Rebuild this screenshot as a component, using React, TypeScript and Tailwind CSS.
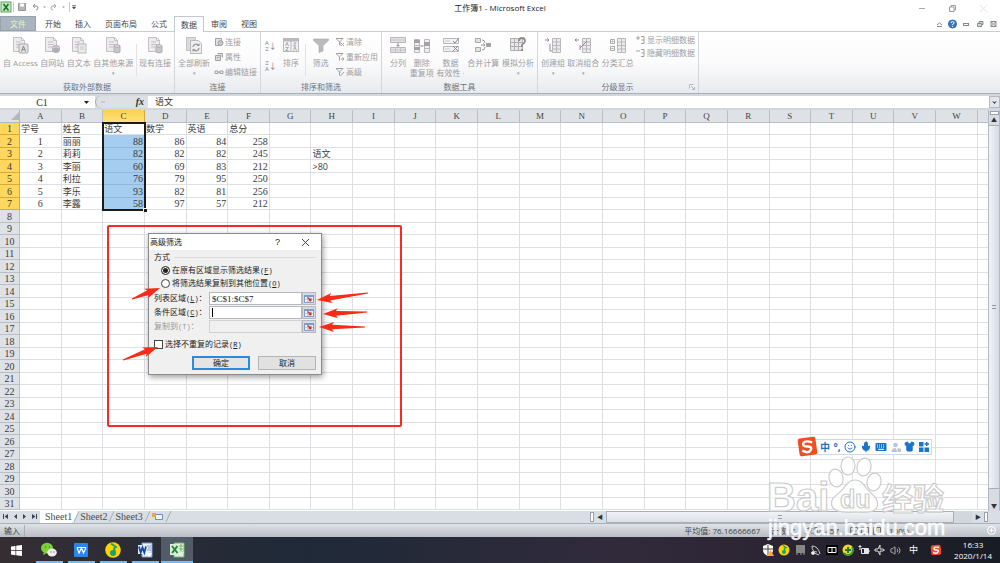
import React, { useState } from "react";
import { Mic, Smile, Shirt, Volume2 } from "lucide-react";

const COLUMNS = "ABCDEFGHIJKLMNOPQRSTUVW".split("");
const ROW_COUNT = 31;

const SHEET: (string | number)[][] = [
  ["学号", "姓名", "语文", "数学", "英语", "总分"],
  [1, "丽丽", 88, 86, 84, 258],
  [2, "莉莉", 82, 82, 82, 245, "", "语文"],
  [3, "李丽", 60, 69, 83, 212, "", ">80"],
  [4, "利拉", 76, 79, 95, 250],
  [5, "李乐", 93, 82, 81, 256],
  [6, "李露", 58, 97, 57, 212],
];

const TABS = ["开始", "插入", "页面布局", "公式", "数据", "审阅", "视图"];

interface GlyphProps {
  kind: string;
}

const Doc = () => (
  <path
    d="M2.5 1.5h8l3 3v11h-11z M10.500 1.500v3h3 M5 6h5 M5 8.500h6 M5 11h4"
    fill="#eeebef"
    stroke="#c4c0c5"
  />
);

// big disabled ribbon icons
const Glyph = ({ kind }: GlyphProps) => (
  <svg viewBox="0 0 18 18" className="size-[18px] shrink-0" fill="none">
    {kind === "access" && (
      <>
        <Doc />
        <rect x="8" y="8" width="9" height="9" rx="1" fill="#e4e2e5" stroke="#aaa" />
        <path d="M10.500 15.500l2-5.500 2 5.500 M11.200 13.700h2.600" stroke="#888" />
      </>
    )}
    {kind === "web" && (
      <>
        <Doc />
        <circle cx="13" cy="13" r="4" fill="#b2afb4" />
        <path d="M10 12q3-3 6 0" stroke="#dddbdf" />
      </>
    )}
    {kind === "text" && (
      <>
        <Doc />
        <rect x="8" y="8" width="8" height="9" fill="#eceaed" stroke="#bbb8bd" />
        <path d="M10 11h4 M10 13h4" stroke="#c8c5ca" />
      </>
    )}
    {kind === "db" && (
      <>
        <Doc />
        <path d="M10 10v6q3 2 6 0v-6" fill="#c9c6cb" stroke="#b0adb2" />
        <ellipse cx="13" cy="10" rx="3" ry="1.300" fill="#dddbdf" stroke="#b0adb2" />
      </>
    )}
    {kind === "refresh" && (
      <>
        <path d="M1.500 1.500h9v13h-9z" fill="#dddadf" stroke="#c4c1c6" />
        <path d="M5.500 4.500h8l3 3v10h-11z" fill="#efeef0" stroke="#bbb8bd" />
        <path d="M8 11a3 3 0 0 1 5-2 M14 12a3 3 0 0 1-5 2" stroke="#999" strokeWidth="1.300" />
        <path d="M14.500 7v3h-3z M7.500 16v-3h3z" fill="#999" />
      </>
    )}
    {kind === "sort" && (
      <>
        <rect x="1.500" y="2.500" width="15" height="13" fill="#f3f2f4" stroke="#bbb8bd" />
        <path d="M1 3h16v2.500H1z" fill="#bbb8bd" />
        <path d="M9 5v10" stroke="#bbb8bd" />
        <path
          d="M3.500 10l1.500-3.500L6.500 10 M3.700 11.500h2.700l-2.700 3h2.700 M11.500 7h2.700l-2.700 3h2.700 M11.500 14.500l1.500-3.500 1.500 3.500"
          stroke="#999"
          strokeWidth=".8"
        />
      </>
    )}
    {kind === "filter" && (
      <path d="M1.500 3h15v1.500L11 9.500v5.500l-4 1.500v-7L1.500 4.500z" fill="#bbb9bd" stroke="#a9a6ab" strokeWidth=".6" />
    )}
    {kind === "split" && (
      <>
        <path d="M1.500 1.500h15v5h-15z M1.500 11.500h15v5h-15z" fill="#e5e2e6" stroke="#bab6bb" />
        <path d="M1.500 4h15 M6.500 11.500v5 M11.500 11.500v5 M1.500 14h15" stroke="#c5c2c7" />
        <path d="M9 7v3 M7.500 9L9 10.500 10.500 9" stroke="#888" />
      </>
    )}
    {kind === "dup" && (
      <>
        <path d="M1.500 3.500h5v13h-5z M11.500 3.500h5v13h-5z M1.500 9.500h5 M11.500 12.500h5" fill="#f0eef0" stroke="#bbb8bd" />
        <path d="M1 4h6v3H1z M11 6h6v4h-6z M1 11h6v3H1z" fill="#a5a1a6" />
        <path d="M7.500 10h3" stroke="#888" />
      </>
    )}
    {kind === "valid" && (
      <>
        <path d="M1.500 2.500h15v5h-15z M1.500 10.500h15v5h-15z" fill="#f2f1f3" stroke="#bbb8bd" />
        <path d="M3 5h5 M3 13h5" stroke="#ccc" />
        <path d="M11 5l2 2 4-5 M11 10l5 5 M16 10l-5 5" stroke="#8f8c91" />
      </>
    )}
    {kind === "merge" && (
      <>
        <path d="M1.500 2.500h5v4h-5z M1.500 11.500h5v4h-5z" fill="#e5e2e6" stroke="#aaa" />
        <path d="M12 7h5v4h-5z" fill="#a5a2a7" />
        <path d="M8 4q3 0 3 3 M8 14q3 0 3-3 M7 9h4 M9.500 7.500L11 9l-1.500 1.500" stroke="#999" />
      </>
    )}
    {kind === "whatif" && (
      <>
        <path d="M1.500 2.500h12v12h-12z M1.500 6.500h12 M1.500 10.500h12 M5.500 2.500v12 M9.500 2.500v12" fill="#e8e6e9" stroke="#b0adb2" />
        <path d="M10 5q0-3 3-3t3 3q0 2-3 4v2" stroke="#8f8c91" strokeWidth="1.800" />
        <path d="M12 13h2v2h-2z" fill="#8f8c91" />
      </>
    )}
    {(kind === "group" || kind === "ungroup" || kind === "subtotal") && (
      <>
        <path d="M8.500 2.500h8v14h-8z M8.500 6h8 M8.500 9.500h8 M8.500 13h8 M12.500 2.500v14" fill="#eceaed" stroke="#bbb8bd" />
        {kind === "group" && <path d="M1 4h4 M3.500 2.500L5 4 3.500 5.500 M6 8v7h2" stroke="#8f8c91" />}
        {kind === "ungroup" && (
          <path d="M1 4h4 M2.500 2.500L1 4l1.500 1.500 M6 12l7-7 M6 9v5" stroke="#8f8c91" />
        )}
        {kind === "subtotal" && (
          <path d="M1.500 3.500h4v4h-4z M1.500 10.500h4v4h-4z M2.500 5.500h2 M3.500 4.500v2 M2.500 12.500h2" stroke="#aaa" />
        )}
      </>
    )}
  </svg>
);

const SmallGlyph = ({ kind }: GlyphProps) => (
  <svg viewBox="0 0 10 10" className="size-[10px] shrink-0" fill="none" stroke="#a3a0a5">
    {kind === "link" && (
      <>
        <path d="M1.500 1.500h6v7h-6z" fill="#e5e2e6" />
        <circle cx="6.500" cy="6" r="2.500" fill="#c9c6cb" />
      </>
    )}
    {kind === "prop" && (
      <>
        <path d="M1.500 3.500h5v5h-5z M3.500 1.500h5v4" fill="#dcdadd" />
        <path d="M3 5.500h2" />
      </>
    )}
    {kind === "chain" && <path d="M1 4h3v2.500H1z M6 4h3v2.500H6z M3.500 5.200h3" />}
    {kind === "clear" && <path d="M1 1.500h7L5 4.500v4 M1.500 2l3 3v3 M6 6l3 3 M9 6L6 9" />}
    {kind === "again" && <path d="M1 1.500h7L5 4.500 M1.500 2l3 3v3.500 M6 7h3 M7.500 5.500L9 7 7.500 8.500" />}
    {kind === "adv" && <path d="M1 1.500h7L5 4.500v1 M1.500 2l3 3v3.500 M5.500 9L9 5" />}
    {kind === "show" && <path d="M0 3h4 M2 1v4 M5 1.500h3v7H5 M5.500 5H8" />}
    {kind === "hide" && <path d="M0 3h4 M5 1.500h3v7H5 M5.500 5H8" />}
  </svg>
);

const Big = ({ kind, lines, drop }: { kind: string; lines: string[]; drop?: boolean }) => (
  <button className="flex shrink-0 flex-col items-center whitespace-nowrap pt-1 text-[8px] leading-[10px]">
    <Glyph kind={kind} />
    <span className="pt-1">{lines[0]}</span>
    {lines[1] && <span>{lines[1]}</span>}
    {drop && !lines[1] && <span className="text-[5px]">▾</span>}
  </button>
);

const Small = ({ kind, label }: { kind: string; label: string }) => (
  <button className="flex items-center gap-px whitespace-nowrap">
    <SmallGlyph kind={kind} />
    {label}
  </button>
);

const GroupBox = ({
  title,
  width,
  children,
}: {
  title: string;
  width: string;
  children: React.ReactNode;
}) => (
  <section className={`flex shrink-0 flex-col border-r border-[#d3d7dc] ${width}`}>
    <div className="flex flex-1 items-start justify-between px-[3px]">{children}</div>
    <h2 className="pb-px text-center text-[8px] leading-[11px] text-[#6b7380]">{title}</h2>
  </section>
);

const Divider = () => <div className="mt-3 h-8 w-px bg-[#dfe2e6]" />;

const SortArrows = ({ top, bottom }: { top: string; bottom: string }) => (
  <button className="flex items-center text-[6px] leading-[6px] text-[#858288]">
    <span className="flex flex-col">
      <span>{top}</span>
      <span>{bottom}</span>
    </span>
    <span className="text-[8px]">↓</span>
  </button>
);

const Ribbon = () => (
  <div className="flex h-[62px] shrink-0 border-b border-[#a9afb7] bg-linear-to-b from-white via-[#fbfbfc] to-[#e7eaee] text-[8px] text-[#a09da0]">
    <GroupBox title="获取外部数据" width="w-[175px]">
      <Big kind="access" lines={["自 Access"]} />
      <Big kind="web" lines={["自网站"]} />
      <Big kind="text" lines={["自文本"]} />
      <Big kind="db" lines={["自其他来源"]} drop />
      <Divider />
      <Big kind="db" lines={["现有连接"]} />
    </GroupBox>
    <GroupBox title="连接" width="w-[86px]">
      <Big kind="refresh" lines={["全部刷新"]} drop />
      <div className="flex flex-col gap-[3px] pt-1 leading-3">
        <Small kind="link" label="连接" />
        <Small kind="prop" label="属性" />
        <Small kind="chain" label="编辑链接" />
      </div>
    </GroupBox>
    <GroupBox title="排序和筛选" width="w-[121px]">
      <div className="flex flex-col gap-2 pt-2 pl-px">
        <SortArrows top="A" bottom="Z" />
        <SortArrows top="Z" bottom="A" />
      </div>
      <Big kind="sort" lines={["排序"]} />
      <Divider />
      <Big kind="filter" lines={["筛选"]} />
      <div className="flex flex-col gap-[3px] pt-1 leading-3">
        <Small kind="clear" label="清除" />
        <Small kind="again" label="重新应用" />
        <Small kind="adv" label="高级" />
      </div>
    </GroupBox>
    <GroupBox title="数据工具" width="w-[156px]">
      <div className="pl-1">
        <Big kind="split" lines={["分列"]} />
      </div>
      <Big kind="dup" lines={["删除", "重复项"]} />
      <Big kind="valid" lines={["数据", "有效性 ·"]} />
      <Big kind="merge" lines={["合并计算"]} />
      <Big kind="whatif" lines={["模拟分析"]} drop />
    </GroupBox>
    <section className="flex w-[161px] shrink-0 flex-col border-r border-[#d3d7dc]">
      <div className="flex flex-1 items-start justify-between px-[3px]">
        <Big kind="group" lines={["创建组"]} drop />
        <Big kind="ungroup" lines={["取消组合"]} drop />
        <Big kind="subtotal" lines={["分类汇总"]} />
        <div className="flex flex-col gap-px pt-[2px] leading-3">
          <Small kind="show" label="显示明细数据" />
          <Small kind="hide" label="隐藏明细数据" />
        </div>
      </div>
      <div className="flex items-center pr-[3px] pb-px">
        <h2 className="flex-1 pl-2 text-center leading-[11px] text-[#6b7380]">分级显示</h2>
        <svg viewBox="0 0 6 6" className="size-[6px]" fill="none" stroke="#b5b9bf">
          <path d="M.5 4.500v-4h4 M2 2l3.500 3.500 M5.500 3v2.500H3" />
        </svg>
      </div>
    </section>
  </div>
);

const TitleBar = () => (
  <header className="grid h-4 shrink-0 grid-cols-[1fr_auto_1fr] items-center">
    <svg viewBox="0 0 84 16" className="h-4 w-[84px]" fill="none">
      <rect x="1" y="2" width="10" height="10" fill="#c9e6c3" stroke="#5aa65d" />
      <path d="M3.500 4l5 6.500 M8.500 4l-5 6.500" stroke="#1f7a2d" strokeWidth="1.800" />
      <path d="M13.500 2v10" stroke="#c5c8cc" />
      <path d="M18.500 3.500h7v7h-7z" fill="#b9b6bb" stroke="#98959a" />
      <path d="M20 3.500h4v3h-4z" fill="#fff" />
      <path d="M33 6h3q2 0 2 2t-2 2 M35 4l-2 2 2 2" stroke="#8f8c91" />
      <path d="M56 6h-3q-2 0-2 2t2 2 M54 4l2 2-2 2" stroke="#a9a6ab" />
      <path d="M43 6.500h3l-1.500 1.500z M62 6.500h3l-1.500 1.500z" fill="#999" />
      <path d="M69.500 2v10" stroke="#c5c8cc" />
      <path d="M72 5.500h4 M72.500 7h3L74 9z" fill="#444" stroke="#444" strokeWidth=".6" />
    </svg>
    <h1 className="text-[8px] text-[#222]">工作簿1 - Microsoft Excel</h1>
    <div className="flex items-center justify-end gap-6 pr-[13px] text-[#999]">
      <button aria-label="最小化" className="h-px w-[6px] bg-[#aaa]" />
      <button aria-label="还原">
        <svg viewBox="0 0 7 7" className="size-[7px]" fill="none" stroke="#999">
          <path d="M.5 2h4.500v4.500H.5z M2 2V.5h4.500V5H5" />
        </svg>
      </button>
      <button aria-label="关闭">
        <svg viewBox="0 0 7 7" className="size-[7px]" stroke="#e2e2e2">
          <path d="M0 0l7 7 M7 0L0 7" />
        </svg>
      </button>
    </div>
  </header>
);

const TabRow = () => (
  <nav className="flex h-4 shrink-0 border-b border-[#c9cdd2] text-[8px] text-[#444]">
    <button className="mr-[2px] w-9 border border-[#97a2ae] bg-[#a9b4bf] text-[#e6f6c0]">文件</button>
    {TABS.map((tab) => (
      <button
        key={tab}
        className={
          tab === "数据"
            ? "-mb-px border border-b-0 border-[#c3c8ce] bg-white px-[6px]"
            : "px-[7px]"
        }
      >
        {tab}
      </button>
    ))}
    <svg viewBox="0 0 64 16" className="ml-auto h-4 w-16" fill="none" stroke="#85888d">
      <path d="M1 9l2.500-2L6 9 M1 10.500h5" />
      <circle cx="16.500" cy="8" r="4" fill="#3d78cc" stroke="#2f65b3" />
      <path d="M15 7q0-1.500 1.500-1.500T18 7q0 1-1.500 1.500v.5 M16.500 10v1" stroke="#fff" />
      <rect x="27.500" y="7.500" width="5" height="2" />
      <path d="M41.500 7.500h4v3h-4z M43 7V5.500h4v3h-1.500" fill="#d5d8dc" />
      <path d="M55 5.500l5 5 M60 5.500l-5 5 M55 5.500h5v5h-5z" />
    </svg>
  </nav>
);

const FormulaBar = () => (
  <div className="flex h-4 shrink-0 items-stretch border-y-2 border-[#d2d7dd] bg-[#d9dde3]">
    <div className="flex w-[95px] items-center bg-white">
      <input
        aria-label="名称框"
        defaultValue="C1"
        className="w-[84px] text-center font-['Liberation_Serif'] text-[10px] text-[#333] outline-none"
      />
      <svg viewBox="0 0 5 3" className="h-[3px] w-[5px]">
        <path d="M0 0h5L2.500 3z" fill="#222" />
      </svg>
    </div>
    <div className="flex flex-1 items-stretch">
      <div className="flex w-[53px] items-center justify-between rounded-l-full border-l border-[#a8adb5] bg-[#dde1e6] px-1">
        <svg viewBox="0 0 6 6" className="size-[6px]" stroke="#b0b4ba" fill="none">
          <path d="M1 3h4" />
        </svg>
        <i className="font-['Liberation_Serif'] text-[10px] leading-none font-bold text-[#333]">fx</i>
      </div>
      <input
        aria-label="编辑栏"
        defaultValue="语文"
        className="min-w-0 flex-1 bg-white px-[7px] text-[9px] text-[#333] outline-none"
      />
      <button aria-label="展开编辑栏" className="flex w-[11px] items-center justify-center border border-[#b5bac2] bg-[#e3e6ea]">
        <svg viewBox="0 0 5 3" className="h-[3px] w-[5px]">
          <path d="M0 0l2.500 1L5 0 2.500 3z" fill="#444" />
        </svg>
      </button>
    </div>
  </div>
);

const Grid = () => (
  <table className="w-full table-fixed border-separate border-spacing-0 text-[9px] leading-[11px] text-[#3a3a3a]">
    <colgroup>
      <col className="w-5" />
      {COLUMNS.map((name) => (
        <col key={name} />
      ))}
      <col className="w-[10px]" />
    </colgroup>
    <thead className="font-['Liberation_Serif'] text-[9px] text-[#444]">
      <tr className="h-[13px] bg-[#dee2e7]">
        <th className="border-r border-b border-[#b1b7c0]">
          <svg viewBox="0 0 8 8" className="ml-auto size-2">
            <path d="M8 0v8H0z" fill="#b3b8bf" />
          </svg>
        </th>
        {COLUMNS.map((name) => (
          <th
            key={name}
            className={
              name === "C"
                ? "border-r border-b border-[#d5a83c] bg-linear-to-b from-[#fbd14b] to-[#ffe27a] font-normal"
                : "border-r border-b border-[#b9bfc7] font-normal"
            }
          >
            {name}
          </th>
        ))}
        <th className="border-b border-[#b9bfc7]" />
      </tr>
    </thead>
    <tbody>
      {Array.from({ length: ROW_COUNT }, (_, row) => (
        <tr key={row} className={row % 2 === 0 ? "h-3" : "h-[13px]"}>
          <th
            className={
              row < 7
                ? "border-r border-b border-[#d9a93a] bg-[#fed75c] font-['Liberation_Serif'] text-[10px] font-normal"
                : "border-r border-b border-[#b9bfc7] bg-[#dee2e7] font-['Liberation_Serif'] text-[10px] font-normal"
            }
          >
            {row + 1}
          </th>
          {COLUMNS.map((name, col) => {
            const value = SHEET[row]?.[col] ?? "";
            const numeric = typeof value === "number";
            const selected = col === 2 && row > 0 && row < 7;
            return (
              <td
                key={name}
                className={[
                  "relative overflow-visible border-r border-b p-0 whitespace-nowrap",
                  selected ? "border-[#90b8da] bg-[#a4cdf0]" : "border-[#dcdfe3]",
                  numeric ? "font-['Liberation_Serif'] text-[10px]" : "pl-px",
                  numeric && col > 0 ? "pr-px text-right" : "",
                  numeric && col === 0 ? "text-center" : "",
                ].join(" ")}
              >
                {value}
                {row === 0 && col === 2 && (
                  <div className="absolute -top-px -left-px z-10 h-[89px] w-[44px] border-2 border-[#1b1b1b]">
                    <span className="absolute -right-[3px] -bottom-[3px] size-1 border-t border-l border-white bg-[#1b1b1b]" />
                  </div>
                )}
              </td>
            );
          })}
          <td className="border-b border-[#dcdfe3] p-0" />
        </tr>
      ))}
    </tbody>
  </table>
);

const Key = ({ char, plain }: { char: string; plain?: boolean }) => (
  <span className="font-['Liberation_Mono'] text-[7px]">
    (<span className={plain ? "" : "underline"}>{char}</span>)
  </span>
);

const RefField = ({
  id,
  label,
  hotkey,
  value,
  disabled,
  caret,
}: {
  id: string;
  label: string;
  hotkey: string;
  value?: string;
  disabled?: boolean;
  caret?: boolean;
}) => (
  <div className="flex h-[13px] items-stretch">
    <label htmlFor={id} className={disabled ? "w-[55px] text-[#999]" : "w-[55px]"}>
      {label}
      <Key char={hotkey} plain={disabled} />：
    </label>
    <div
      className={
        disabled
          ? "flex flex-1 items-center border border-[#d2d2d2] bg-[#f0f0f0] pl-[2px]"
          : "flex flex-1 items-center border border-[#b5b9be] bg-white pl-[2px]"
      }
    >
      {caret && <span className="h-[9px] w-px bg-black" />}
      <input
        id={id}
        disabled={disabled}
        defaultValue={value}
        className="w-full min-w-0 font-['Liberation_Serif'] text-[9px] outline-none"
      />
    </div>
    <button aria-label={`选择${label}`} className="flex w-[14px] items-center justify-center border border-[#b5b9be] bg-[#d5d9e0]">
      <svg viewBox="0 0 10 8" className="h-2 w-[10px]" fill="none">
        <path d="M.5.5h9v7h-9z" fill="#eef3fb" stroke="#7f9ccc" />
        <path d="M0 0h10v2H0z" fill="#7f9ccc" />
        <path d="M1 4.500h8 M3.500 2v5.500 M6.500 2v5.500" stroke="#a9bde0" strokeWidth=".7" />
        <path d="M3.500 2.500l3 2.500" stroke="#d92a1c" strokeWidth="1.500" />
        <path d="M7.500 2.800v3.400H4z" fill="#d92a1c" />
      </svg>
    </button>
  </div>
);

const radioClass =
  "size-[9px] shrink-0 appearance-none rounded-full border border-[#444] bg-white checked:bg-[#222] checked:shadow-[inset_0_0_0_1px_#fff]";

const FilterDialog = () => {
  const [mode, setMode] = useState("inplace");

  return (
    <div
      role="dialog"
      aria-label="高级筛选"
      className="absolute top-[233px] left-[148px] w-[174px] border border-[#8b8b8b] bg-[#f0f0f0] text-[8px] leading-[12px] text-[#222] shadow-[1px_2px_6px_rgba(0,0,0,0.4)]"
    >
      <div className="flex h-4 items-center bg-white pr-3 pl-px">
        <h2 className="flex-1">高级筛选</h2>
        <button className="mr-[22px] font-['Liberation_Sans'] text-[9px]">?</button>
        <button aria-label="关闭">
          <svg viewBox="0 0 7 7" className="size-[7px]" stroke="#444">
            <path d="M0 0l7 7 M7 0L0 7" />
          </svg>
        </button>
      </div>
      <form className="flex flex-col px-[5px] pt-px pb-1" onSubmit={(e) => e.preventDefault()}>
        <div className="flex items-center gap-1">
          方式
          <hr className="flex-1 border-[#dcdcdc]" />
        </div>
        <label className="flex items-center gap-[2px] pt-px pl-[7px]">
          <input
            type="radio"
            name="mode"
            className={radioClass}
            checked={mode === "inplace"}
            onChange={() => setMode("inplace")}
          />
          <span>
            在原有区域显示筛选结果
            <Key char="F" />
          </span>
        </label>
        <label className="flex items-center gap-[2px] pl-[7px]">
          <input
            type="radio"
            name="mode"
            className={radioClass}
            checked={mode === "copy"}
            onChange={() => setMode("copy")}
          />
          <span>
            将筛选结果复制到其他位置
            <Key char="O" />
          </span>
        </label>
        <div className="flex flex-col gap-px pt-[2px]">
          <RefField id="list" label="列表区域" hotkey="L" value="$C$1:$C$7" />
          <RefField id="criteria" label="条件区域" hotkey="C" caret />
          <RefField id="copyto" label="复制到" hotkey="T" disabled />
        </div>
        <label className="flex items-center gap-[2px] pt-[5px]">
          <input type="checkbox" className="size-[9px] appearance-none border border-[#444] bg-white" />
          <span>
            选择不重复的记录
            <Key char="R" />
          </span>
        </label>
        <div className="flex justify-end gap-2 pt-[5px]">
          <button className="flex h-[14px] w-[58px] items-center justify-center border-2 border-[#2a8add] bg-[#e4e4e4]">
            确定
          </button>
          <button className="flex h-[14px] w-[58px] items-center justify-center border border-[#b5b5b5] bg-[#e1e1e1]">
            取消
          </button>
        </div>
      </form>
    </div>
  );
};

const ARROWS = [
  { tail: [132, 299], tip: [160, 288] },
  { tail: [368, 293], tip: [317, 300] },
  { tail: [367, 312], tip: [323, 314] },
  { tail: [365, 327], tip: [319, 327] },
  { tail: [123, 360], tip: [158, 347] },
];

const Arrows = () => (
  <svg className="pointer-events-none absolute top-0 left-0 h-[420px] w-[420px]" fill="#fb2a17">
    {ARROWS.map(({ tail, tip }) => {
      const dx = tip[0] - tail[0];
      const dy = tip[1] - tail[1];
      const len = Math.hypot(dx, dy);
      const angle = (Math.atan2(dy, dx) * 180) / Math.PI;
      return (
        <path
          key={tail.join()}
          transform={`translate(${tail[0]} ${tail[1]}) rotate(${angle})`}
          d={`M0 -.6L${len - 13} -2.300L${len - 15} -5L${len} 0L${len - 15} 5L${len - 13} 2.300L0 .6z`}
        />
      );
    })}
  </svg>
);

const ImeBar = () => (
  <div className="absolute top-[436px] left-[797px] flex items-center">
    <svg viewBox="0 0 20 20" className="z-10 -mr-3 size-[21px]">
      <rect x="1.500" y="1.500" width="17" height="17" rx="2" fill="#ef4e23" transform="rotate(-8 10 10)" />
      <path d="M14.500 6Q7 4 6 7t4 3 3 3.500-8 .5" fill="none" stroke="#fff" strokeWidth="2.300" />
    </svg>
    <div className="flex h-4 w-[126px] items-center justify-between border border-[#cfdae6] bg-white pr-[2px] pl-[13px] text-[#1c74c9]">
      <b className="text-[10px] leading-none">中</b>
      <b className="text-[10px] leading-none">°,</b>
      <Smile size={12} />
      <Mic size={12} fill="#1c74c9" />
      <svg viewBox="0 0 12 10" className="h-[10px] w-3">
        <rect x=".5" y="1" width="11" height="8" rx="1" fill="#1c74c9" />
        <path d="M2 3h8 M2 5h8" stroke="#fff" strokeDasharray="1 1" />
        <path d="M3 7.300h6" stroke="#fff" />
      </svg>
      <svg viewBox="0 0 10 10" className="size-[10px]" fill="#b9c5da">
        <circle cx="4.500" cy="3" r="2.300" />
        <path d="M.5 10q0-4 4-4l2 4z M6 6.500h4V10H7z" />
      </svg>
      <Shirt size={11} fill="#1c74c9" />
      <svg viewBox="0 0 10 10" className="size-[10px]" fill="#1c74c9">
        <path d="M0 0h4.500v4.500H0z M0 5.500h4.500V10H0z M5.500 5.500H10V10H5.500z M7 0h1.500v4H7z M5.500 1.300H10v1.500H5.500z" />
      </svg>
    </div>
  </div>
);

const Watermark = () => (
  <svg
    viewBox="0 0 180 90"
    className="pointer-events-none absolute top-[455px] left-[767px] h-[90px] w-[180px]"
    fill="#fff"
    fillOpacity=".7"
    stroke="#cdcdcd"
    strokeWidth="1.200"
  >
    <text x="0" y="56" fontSize="40" className="font-['Liberation_Sans'] font-bold">Bai</text>
    <ellipse cx="69" cy="23" rx="7" ry="9" transform="rotate(-12 69 23)" />
    <ellipse cx="81" cy="11" rx="7" ry="9" />
    <ellipse cx="97" cy="12" rx="7" ry="9" transform="rotate(12 97 12)" />
    <ellipse cx="107" cy="27" rx="7" ry="9" transform="rotate(12 107 27)" />
    <path d="M88 25c8 0 10 8 16 13s8 9 6 14-8 6-22 5c-12 1-21 0-23-6s2-9 8-14 7-12 15-12z" />
    <text x="73" y="53" fontSize="25" className="font-['Liberation_Sans'] font-bold">du</text>
    <text x="115" y="55" fontSize="31" className="font-['Noto_Sans_CJK_SC'] font-bold">经验</text>
    <text x="1" y="80" fontSize="22" fillOpacity=".9" stroke="#fff" strokeWidth=".4" className="font-['Liberation_Sans']">
      jingyan.baidu.com
    </text>
  </svg>
);

const SheetBar = () => (
  <div className="flex h-3 shrink-0 items-stretch bg-[#d9dee5]">
    <svg viewBox="0 0 40 12" className="h-3 w-10 shrink-0" fill="#3b4350">
      <path d="M3 3h1v5H3z M8 3v5L4.500 5.500z M17 3v5l-3-2.500z M23 3v5l3-2.500z M32 3v5l3.500-2.500z M36 3h1v5h-1z" />
    </svg>
    <div className="flex flex-1 font-['Liberation_Serif'] text-[10px] leading-[11px] text-[#4c4c4c]">
      {["Sheet1", "Sheet2", "Sheet3"].map((name, i) => (
        <button key={name} className={i === 0 ? "flex bg-white pl-[5px]" : "flex pl-px"}>
          {name}
          <svg viewBox="0 0 7 12" className={i === 0 ? "h-3 w-[7px] bg-[#d9dee5]" : "h-3 w-[7px]"}>
            {i === 0 && <path d="M0 0h7L2 11H0z" fill="#fff" />}
            <path d="M7 0L2 11" stroke="#a5acb6" fill="none" />
          </svg>
        </button>
      ))}
      <svg viewBox="0 0 24 12" className="h-3 w-6" fill="none">
        <path d="M5.500 3.500h7v5h-7z" fill="#f2f6fd" stroke="#6d8bc0" />
        <path d="M2 2h4v4H2z" fill="#efa63c" />
        <path d="M21 0l-5 11" stroke="#a5acb6" />
      </svg>
    </div>
    <div className="flex w-[41%] items-center gap-[3px] text-[6px] text-[#333]">
      <span className="h-[10px] w-1 border border-[#9aa1ac] bg-white" />
      <button aria-label="向左滚动">◀</button>
      <div className="flex h-full flex-1 bg-[#d2d7de]">
        <div className="flex w-[95%] items-center justify-center border border-[#a8afb9] bg-linear-to-b from-[#f1f3f6] to-[#dce0e6]">
          <span className="size-1 border-y border-[#9aa1ac]" />
        </div>
      </div>
      <button aria-label="向右滚动">▶</button>
      <span className="mr-3 h-[10px] w-1 border border-[#9aa1ac] bg-white" />
    </div>
  </div>
);

const StatusBar = () => (
  <footer className="flex h-[14px] shrink-0 items-center border-t border-[#aab0b8] bg-linear-to-b from-[#dfe2e6] to-[#b9bec5] px-1 text-[8px] leading-[12px] text-[#444]">
    <span className="w-[21px] border-r border-[#a9aeb5]">输入</span>
    <div className="ml-auto flex items-center gap-[10px] whitespace-nowrap">
      <span>平均值: 76.16666667</span>
      <span>计数: 7</span>
      <span>求和: 457</span>
      <span className="flex w-[138px] items-center gap-1">
        <svg viewBox="0 0 36 10" className="h-[10px] w-9" fill="none" stroke="#777">
          <path d="M1.500 1.500h7v7h-7z M1.500 5h7 M5 1.500v7 M12.500 1.500h7v7h-7z M24.500 1.500h7v7h-7z M24.500 5h3V1.500" />
        </svg>
        100%
      </span>
    </div>
    <button aria-label="放大">
      <svg viewBox="0 0 9 9" className="size-[9px]" fill="none" stroke="#fff">
        <circle cx="4.500" cy="4.500" r="4" />
        <path d="M2.500 4.500h4 M4.500 2.500v4" />
      </svg>
    </button>
  </footer>
);

const TaskIcon = ({ kind }: GlyphProps) => (
  <svg viewBox="0 0 16 16" className="size-4" fill="none">
    {kind === "wechat" && (
      <>
        <ellipse cx="6" cy="6" rx="6" ry="5.200" fill="#7bd13c" />
        <path d="M3 10l-1 3 4-2z" fill="#7bd13c" />
        <ellipse cx="11" cy="10.500" rx="4.800" ry="4" fill="#eee" />
        <path d="M4 5h1 M8 5h1 M9.500 10h1 M12.500 10h1" stroke="#3a5a2a" />
      </>
    )}
    {kind === "wps" && (
      <>
        <rect x="1" y="1" width="14" height="14" rx="1" fill="#2b85f0" />
        <path d="M4 5.500h9 M4 5.500l2 5.500 2.500-5 2 5 2.500-5.500" stroke="#fff" strokeWidth="1.200" />
      </>
    )}
    {kind === "music" && (
      <>
        <circle cx="8" cy="8" r="7.800" fill="#fcd30a" />
        <path d="M6 1.500l5 3.500-2 1.500 1 4" stroke="#1da263" strokeWidth="1.800" />
        <circle cx="8" cy="11" r="3" fill="#1da263" />
      </>
    )}
    {kind === "word" && (
      <>
        <path d="M5 1h10v14H5z" fill="#e8effa" stroke="#7c9fd6" />
        <path d="M10 4h4 M11 6h3 M10 8h4 M9 11h5" stroke="#7c9fd6" />
        <path d="M1 3h9v9H1z" fill="#e3ecf9" />
        <path d="M2 4.500l1.700 6 1.800-5 1.800 5L9 4.500" stroke="#174a9c" strokeWidth="1.800" />
        <path d="M9 10l6 1-3 4z" fill="#fff" />
      </>
    )}
    {kind === "excel" && (
      <>
        <path d="M5 1h10v14H5z" fill="#e3f2df" stroke="#6eb36b" />
        <path d="M10 4h4 M10 7h4 M10 10h4 M12 2v12" stroke="#6eb36b" />
        <path d="M1 2h9v11H1z" fill="#d8eed4" />
        <path d="M3 4l5.500 7 M8.500 4L3 11" stroke="#23853a" strokeWidth="2" />
        <path d="M9 9l6 1-3 5z" fill="#dff1db" />
      </>
    )}
  </svg>
);

const Taskbar = () => (
  <div className="flex h-[26px] shrink-0 items-stretch bg-linear-to-r from-[#352e33] via-[#3a2b3e] via-60% to-[#181c24] text-white">
    <div className="flex flex-1 bg-linear-to-r from-[#352e33] via-[#1f2938] via-40% to-transparent">
      <button aria-label="开始" className="mr-px flex w-8 items-center justify-center">
        <svg viewBox="0 0 11 11" className="size-[11px]" fill="#fff">
          <path d="M0 1.500l4.500-.6v4.300H0z M5.200.8L11 0v5.200H5.200z M0 5.900h4.500v4.300L0 9.500z M5.200 5.900H11V11l-5.800-.8z" />
        </svg>
      </button>
      {["wechat", "wps", "music", "word", "excel"].map((kind) => (
        <button
          key={kind}
          aria-label={kind}
          className={
            kind === "excel"
              ? "flex w-8 flex-col items-center justify-between bg-[#525c69] pt-[5px]"
              : "flex w-8 flex-col items-center justify-between pt-[5px]"
          }
        >
          <TaskIcon kind={kind} />
          <span className={kind === "excel" ? "h-[2px] w-full bg-[#76b9ed]" : "h-[2px] w-[27px] bg-[#76b9ed]"} />
        </button>
      ))}
    </div>
    <div className="flex items-center gap-1 pr-2">
      <svg viewBox="0 0 12 12" className="size-3">
        <path d="M6 0l5 2v4q0 4-5 6-5-2-5-6V2z" fill="#fff" />
        <path d="M6 1v10 M1 5h10" stroke="#444" />
        <path d="M8.500 6l3.500 6H5z" fill="#fcb315" />
      </svg>
      <svg viewBox="0 0 12 12" className="size-3" fill="none">
        <circle cx="6" cy="6" r="5.500" fill="#fcd30a" />
        <path d="M5 1.500l3 2-1.500 1v3" stroke="#1da263" strokeWidth="1.500" />
        <circle cx="6" cy="8" r="2" fill="#1da263" />
      </svg>
      <svg viewBox="0 0 12 12" className="size-3" fill="#858585">
        <path d="M2 1h9v8H2z" />
        <path d="M3 9v2 M7 9v2 M10 9v2" stroke="#999" />
      </svg>
      <svg viewBox="0 0 12 12" className="size-3" fill="none" stroke="#ccc">
        <path d="M2 2q6 0 8 8 M2 2q0 6 5 6 M4 9l5 2" />
        <circle cx="3" cy="9" r="1.500" fill="#fff" />
      </svg>
      <svg viewBox="0 0 12 12" className="size-3" fill="none" stroke="#fff">
        <path d="M0 1h12v10H0z" fill="#000" stroke="none" />
        <path d="M2 3.500h8v5H2z M6 3.500v5" />
      </svg>
      <svg viewBox="0 0 12 12" className="size-3" fill="none">
        <circle cx="6" cy="6" r="5.500" fill="#f7d51d" />
        <path d="M2 9a5 5 0 0 0 8-6" stroke="#2b9c35" strokeWidth="2" />
        <path d="M6 3v6 M3 6h6" stroke="#1d7a28" strokeWidth="2" />
      </svg>
      <svg viewBox="0 0 12 12" className="size-3" fill="none" stroke="#e5e5e5">
        <path d="M3.500 4.500h7v5h-7z M11 6v2 M.5 2.500h3 M2 1v5" />
        <path d="M6 5h4v4H6z" fill="#e5e5e5" stroke="none" />
      </svg>
      <svg viewBox="0 0 12 12" className="size-3" fill="none" stroke="#ddd">
        <path d="M1 5h3l2-4v4h3q3 1 0 2H6v4L4 7H1z" />
      </svg>
      <Volume2 size={11} className="text-[#bbb]" />
      <span className="px-1 text-[9px]">中</span>
      <svg viewBox="0 0 12 12" className="mx-1 size-3">
        <rect x="1" y="1" width="10" height="10" rx="2" fill="#ef4e23" transform="rotate(-6 6 6)" />
        <path d="M9 3.500Q4 2.500 4 4.300T6.500 6 8 8 3 8.500" fill="none" stroke="#fff" strokeWidth="1.400" />
      </svg>
      <time className="flex flex-col pl-1 text-center text-[8px] leading-[11px]">
        <span>16:33</span>
        <span>2020/1/14</span>
      </time>
    </div>
  </div>
);

const App = () => {
  return (
    <div className="relative flex h-screen flex-col overflow-hidden bg-white font-['Open_Sans','Noto_Sans_CJK_SC',sans-serif]">
      <TitleBar />
      <TabRow />
      <Ribbon />
      <FormulaBar />
      <main className="flex min-h-0 flex-1">
        <div className="min-w-0 flex-1 overflow-hidden">
          <Grid />
        </div>
        <div className="flex w-3 shrink-0 flex-col items-center border-x border-[#b3b9c2] bg-[#d8dce2] text-[6px] leading-[10px] text-[#333]">
          <span className="mt-px h-1 w-[9px] border border-[#9aa1ac] bg-white" />
          <button aria-label="向上滚动">▲</button>
          <div className="flex w-full flex-1 items-center justify-center border-y border-[#a8afb9] bg-linear-to-r from-[#f1f3f6] to-[#d6dbe2]">
            <span className="h-1 w-1 border-y border-[#8f96a1]" />
          </div>
          <div className="h-3" />
          <button aria-label="向下滚动">▼</button>
        </div>
      </main>
      <SheetBar />
      <StatusBar />
      <Taskbar />
      <div className="pointer-events-none absolute top-[225px] left-[107px] h-[202px] w-[295px] rounded-xs border-2 border-[#fb2a1f]" />
      <FilterDialog />
      <Arrows />
      <ImeBar />
      <Watermark />
    </div>
  );
};

export default App;
